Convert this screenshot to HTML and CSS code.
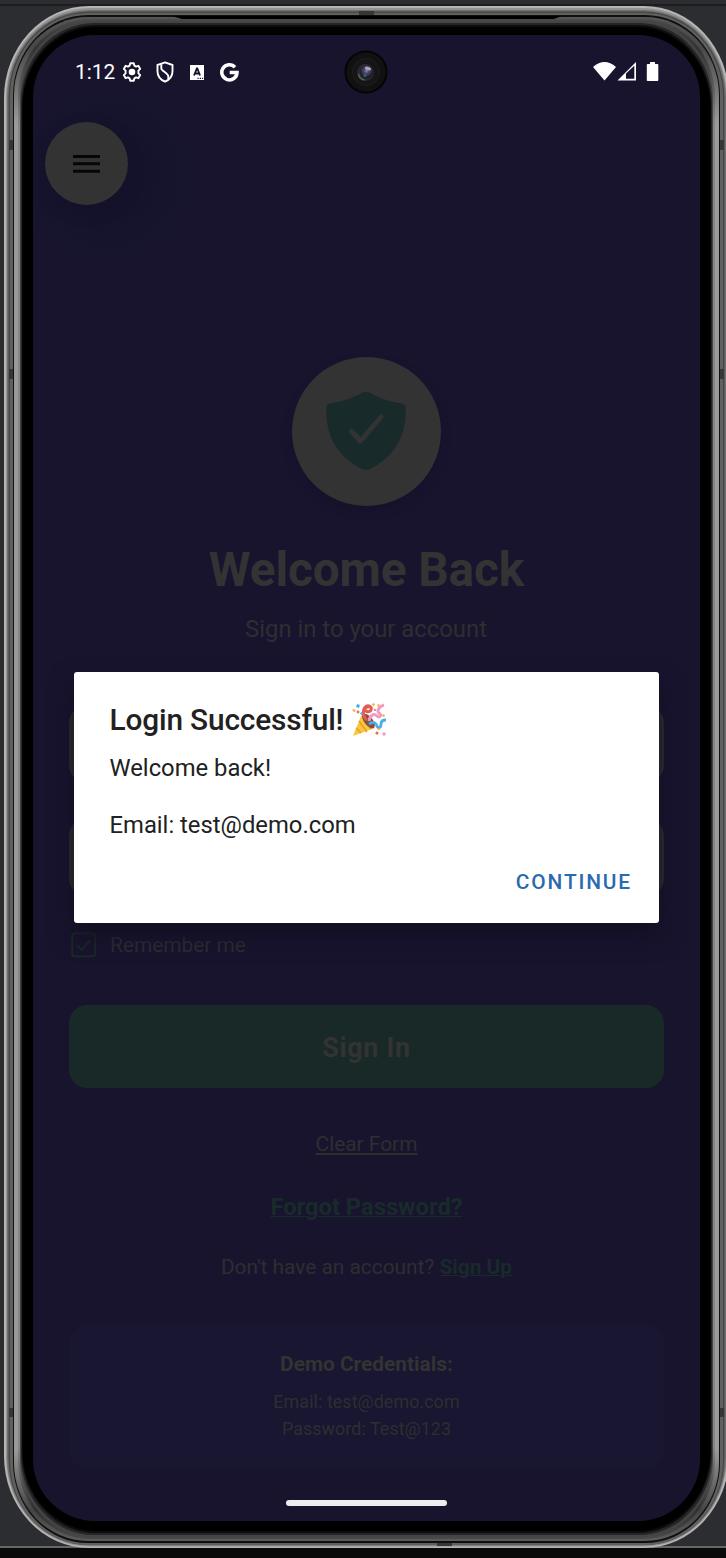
FILE: index.html
```html
<!DOCTYPE html>
<html lang="en">
<head>
<meta charset="utf-8">
<title>Sign in</title>
<link rel="stylesheet" href="styles.css">
</head>
<body>
<div class="stage">
  <svg class="frame" width="726" height="1558" viewBox="0 0 726 1558" aria-hidden="true">
    <defs>
      <linearGradient id="rim" x1="0" y1="0" x2="0" y2="1"><stop offset="0" stop-color="#555"/><stop offset=".02" stop-color="#484848"/><stop offset=".07" stop-color="#9a9a9a"/><stop offset=".94" stop-color="#9a9a9a"/><stop offset=".98" stop-color="#444"/><stop offset="1" stop-color="#5c5c5c"/></linearGradient>
      <linearGradient id="rim2" x1="0" y1="0" x2="0" y2="1"><stop offset="0" stop-color="#4a4a4a"/><stop offset=".02" stop-color="#333"/><stop offset=".07" stop-color="#858585"/><stop offset=".94" stop-color="#858585"/><stop offset=".98" stop-color="#303030"/><stop offset="1" stop-color="#494949"/></linearGradient>
    </defs>
    <rect width="726" height="1558" fill="#2c2d31"/>
    <rect y="4" width="726" height="2" fill="#1d1d20"/>
    <rect y="1546" width="726" height="2" fill="#67676a"/>
    <rect y="1548" width="726" height="10" fill="#0a0a0a"/>
    <rect x="4" y="6" width="725" height="1542" rx="85" ry="92" fill="#b5b5b3"/>
    <rect x="6" y="8" width="721" height="1538.500" rx="83" ry="90" fill="#939393"/>
    <rect x="7" y="10" width="719" height="1535.500" rx="82" ry="88" fill="#707070"/>
    <rect x="8.500" y="11.500" width="716" height="1533.500" rx="80" ry="86" fill="#474747"/>
    <rect x="10" y="13" width="713" height="1532" rx="78" ry="84" fill="#606060"/>
    <rect x="13" y="15" width="707" height="1528" rx="75" ry="80" fill="#101010"/>
    <rect x="14" y="17" width="705" height="1524" rx="74" ry="78" fill="url(#rim)"/>
    <rect x="18" y="19" width="697" height="1520" rx="72" ry="78" fill="url(#rim2)"/>
    <rect x="20" y="21" width="693" height="1516" rx="72" ry="78" fill="#444"/>
    <rect x="21" y="23" width="691" height="1512" rx="73" ry="79" fill="#252525"/>
    <rect x="22" y="25" width="689" height="1508" rx="74" ry="80" fill="#0c0c0c"/>
    <rect x="22.500" y="27" width="688" height="1504" rx="74" ry="80" fill="#000"/>
    <path d="M172 16H562L554 19H182Z" fill="#000"/>
    <path d="M9 140h4v10H9zM9 369h4v10H9zM9 1408h4v9H9zM720 140h4v10h-4zM720 369h4v10h-4zM720 1408h4v9h-4zM359 11h15v4h-15zM437 1543h15v3h-15z" fill="#363636"/>
  </svg>

  <main class="screen">
    <header class="status">
      <span class="clock">1:12</span>
      <svg class="st-gear" width="20" height="20" viewBox="0 0 20 20"><path d="M8.200 1.200h3.600l.6 2.500 1.600.9 2.400-.8 1.800 3.100-1.800 1.800v2.600l1.800 1.800-1.800 3.100-2.400-.8-1.600.9-.6 2.500H8.200l-.6-2.500-1.600-.9-2.400.8-1.800-3.100 1.800-1.800V8.700L1.800 6.900l1.800-3.100 2.400.8 1.600-.9z" fill="none" stroke="#fff" stroke-width="1.900" stroke-linejoin="round"/><circle cx="10" cy="10" r="3.300" fill="#fff"/></svg>
      <svg class="st-shield" width="18" height="22" viewBox="0 0 18 22"><path d="M9 1.400 16.500 4v6.200c0 4.800-3 8.500-7.500 10.400C4.500 18.700 1.500 15 1.500 10.200V4Z" fill="none" stroke="#fff" stroke-width="1.900"/><path d="M5.300 3.200v4.300c0 2.500 7 4.500 7 8v2.500" fill="none" stroke="#fff" stroke-width="1.900"/></svg>
      <svg class="st-a" width="14" height="15" viewBox="0 0 14 15"><rect width="14" height="15" fill="#fff"/><path d="M4 10.500 6.900 3.500h.4L10 10.500M5.200 8.500h3.700" fill="none" stroke="#18142e" stroke-width="1.900"/><path d="M7.500 12.700h1.200v1.200H7.500zm2.300 0H11v1.200H9.800zm2.200 0h1.200v1.200H12z" fill="#18142e"/></svg>
      <svg class="st-g" width="19" height="19" viewBox="0 0 19 19"><path d="M15 4.200A7.600 7.600 0 1 0 17 9.600H9.700" fill="none" stroke="#fff" stroke-width="3.500"/></svg>
      <svg class="camera" width="44" height="44" viewBox="0 0 44 44"><defs><radialGradient id="lens" cx=".5" cy=".4"><stop offset="0" stop-color="#8d88ad"/><stop offset=".4" stop-color="#4c4668"/><stop offset=".8" stop-color="#26303e"/><stop offset="1" stop-color="#1a1a1e"/></radialGradient></defs><circle cx="22" cy="22" r="21.500" fill="#030303"/><circle cx="22" cy="22" r="19.700" fill="#111"/><circle cx="22" cy="22" r="13.500" fill="#151515" stroke="#1e1e1e"/><circle cx="21.500" cy="22.500" r="8.500" fill="#2a2a2c"/><path d="M14.500 24a7.500 7.500 0 0 0 6 6" fill="none" stroke="#5a5a5a" stroke-width="1.500"/><circle cx="22.500" cy="22" r="6.500" fill="url(#lens)"/><ellipse cx="24" cy="18.500" rx="3.200" ry="1.600" transform="rotate(20 24 18.500)" fill="#b79bc9"/><circle cx="21" cy="25.500" r="1.800" fill="#35566c"/></svg>
      <svg class="signals" width="68" height="22" viewBox="0 0 68 22"><path d="M0 6Q11.500-4 23 6L11.500 19.500Z" fill="#fff"/><path d="M24.500 19.500 43 1v18.500Z" fill="#fff"/><path d="M33 17.800v-5.300l8.300-7.700v13Z" fill="#18142e"/><path d="M57 1h5v2h2.500q.8 0 .8.800v15.400q0 .8-.8.800H54.600q-.8 0-.8-.8V3.800q0-.8.8-.8H57Z" fill="#fff"/></svg>
    </header>

    <button class="menu" aria-label="Menu"><svg width="28" height="20" viewBox="0 0 28 20"><path d="M0 2.500h27M0 9.700h27M0 17.300h27" stroke="#060606" stroke-width="3"/></svg></button>

    <div class="logo"><svg width="80" height="80" viewBox="0 0 80 80"><path d="M36.500 1.500Q40-.2 43.500 1.500C53 7 64 11 76.500 12.500Q79.300 13 79.500 16C81 44 69 66 44 78Q40 79.700 36 78C11 66-1 44 .5 16Q.7 13 3.500 12.500C16 11 27 7 36.500 1.500Z" fill="#182a29"/><path d="m25.500 40.500 9 9.500 20.500-24" fill="none" stroke="#333" stroke-width="5" stroke-linecap="round" stroke-linejoin="round"/></svg></div>
    <h1 class="title">Welcome Back</h1>
    <p class="subtitle">Sign in to your account</p>

    <form class="form">
      <div class="field"></div>
      <div class="field"></div>
      <div class="remember"><svg width="26" height="26" viewBox="0 0 26 26"><rect x="1.200" y="1.200" width="23" height="23" rx="2.500" fill="none" stroke="#182a29" stroke-width="2"/><path d="m6.500 13.500 4 4.500 8.500-10" fill="none" stroke="#182a29" stroke-width="2"/></svg><span class="remember-text">Remember me</span></div>
      <div class="signin"><span class="signin-text">Sign In</span></div>
    </form>
    <p class="clear"><span class="clear-text">Clear Form</span></p>
    <p class="forgot"><span class="forgot-text">Forgot Password?</span></p>
    <p class="signup"><span class="signup-text">Don't have an account? <b class="signup-link">Sign Up</b></span></p>
    <section class="demo">
      <h2 class="demo-title">Demo Credentials:</h2>
      <p class="demo-line">Email: test@demo.com</p>
      <p class="demo-line">Password: Test@123</p>
    </section>
    <div class="homebar"></div>

    <div class="dialog" role="dialog">
      <h2 class="dialog-title"><span class="dialog-title-text">Login Successful!</span><svg width="34" height="34" viewBox="0 0 34 34"><path d="M1 33 9.500 12Q20 15 23 25Z" fill="#fcc73e"/><path d="m7 18 8 11M4 25l5 5M10 13l9 13" stroke="#e99b2d" stroke-width="1.500"/><ellipse cx="16.500" cy="18" rx="4.200" ry="8.700" transform="rotate(-39 16.500 18)" fill="#85513e"/><path d="M14.500 17C8 9 13 1 17.500 3s0 8-3.500 5 2-5 4.500-4" fill="none" stroke="#e75b52" stroke-width="3"/><path d="M17 18c1-6 5-8 8-5s5-1 2-3 1-7 5-8" fill="none" stroke="#f09ac4" stroke-width="3"/><path d="M17 21c5-3 7-1 8 2s4 2 4-2 3-4 5-4" fill="none" stroke="#4baee8" stroke-width="2.800"/><path d="m5 1 3 1-1 3-3-1zM8 10l2-1 1 2-2 1z" fill="#4baee8"/><path d="m0 7 2-1 2 2-2 1zm20-6 2-1 1 2-2 1zm5 1 2-1 1 2-2 1zm6 9 2 1-1 2-2-1zM26 25h2v2h-2z" fill="#f6ad3c"/><circle cx="6" cy="9" r="1.400" fill="#ed665b"/><circle cx="25" cy="30" r="1.600" fill="#ed665b"/><circle cx="32" cy="31" r="1.700" fill="#f09ac4"/><circle cx="23" cy="7" r="1" fill="#ed665b"/></svg></h2>
      <p class="dialog-text"><span class="dt1">Welcome back!</span></p>
      <p class="dialog-text"><span class="dt2">Email: test@demo.com</span></p>
      <button class="continue">CONTINUE</button>
    </div>
  </main>
</div>
</body>
</html>
```
FILE: styles.css
```css
* { box-sizing: border-box; margin: 0; padding: 0; }
html, body { overflow: hidden; background: #2c2d31; }
body { font-family: Roboto, sans-serif; font-weight: 400; }
button { border: 0; font-family: inherit; }
svg { display: block; flex: none; }
p, h1, h2, span { white-space: nowrap; }
.stage { position: relative; width: 726px; height: 1558px; padding: 35px 26px 37px 33px; overflow: hidden; }
.frame { position: absolute; left: 0; top: 0; }
.screen { position: relative; width: 667px; height: 1486px; border-radius: 62px; background: radial-gradient(circle at 75px 140px, #15132c 40px, #18142e 100px); color: #2e2e31; display: flex; flex-direction: column; overflow: hidden; }
.status { height: 74px; padding: 0 39px 0 42px; display: flex; align-items: center; flex: none; }
.clock { width: 47px; color: #fff; font-size: 20.860px; line-height: 26px; }
.st-shield { margin-left: 14px; }
.st-a { margin-left: 16px; }
.st-g { margin-left: 16px; }
.camera { margin-left: 105px; }
.signals { margin-left: auto; }
.menu { width: 83px; height: 83px; margin: 13px 0 0 12px; border-radius: 50%; background: #333; display: flex; align-items: center; justify-content: center; flex: none; box-shadow: 0 6px 14px #14122b; }
.logo { width: 149px; height: 149px; margin: 152px auto 0; border-radius: 50%; background: #333; display: flex; align-items: center; justify-content: center; flex: none; box-shadow: 0 5px 9px #15122b; }
.logo svg { margin: -1px 1px 0 0; }
.title { margin-top: 36px; height: 57px; font-size: 47.700px; line-height: 57px; font-weight: 700; text-align: center; letter-spacing: -0.080px; color: #333; }
.subtitle { margin-top: 16px; height: 28px; font-size: 23.850px; line-height: 28px; text-align: center; padding-right: 1px; }
.form { margin: 62px 36px 0; display: flex; flex-direction: column; flex: none; }
.field { height: 78px; margin-bottom: 35px; border-radius: 18px; background: #333; }
.remember { display: flex; align-items: center; height: 28px; padding-left: 2px; gap: 13px; font-size: 20.860px; }
.signin { margin-top: 46px; height: 83px; border-radius: 18px; background: #182927; color: #333; display: flex; align-items: center; justify-content: center; font-size: 26.800px; font-weight: 700; padding-top: 3px; letter-spacing: 0.700px; }
.clear { margin-top: 43px; height: 26px; font-size: 20.860px; line-height: 26px; text-align: center; text-decoration: underline; }
.forgot { margin-top: 36px; height: 28px; font-size: 23.850px; line-height: 28px; font-weight: 700; text-align: center; text-decoration: underline; text-decoration-thickness: 1px; color: #182a29; letter-spacing: -0.060px; }
.signup { margin-top: 33px; height: 26px; font-size: 20.860px; line-height: 26px; text-align: center; }
.signup-link { color: #182a29; text-decoration: underline; text-decoration-thickness: 1px; }
.demo { margin: 45px 36px 0; height: 144px; padding-top: 26px; border-radius: 18px; background: #181630; text-align: center; flex: none; }
.demo-title { font-size: 20.860px; line-height: 26px; font-weight: 700; margin-bottom: 11px; color: #333; }
.demo-line { font-size: 17.880px; line-height: 27px; letter-spacing: 0.080px; }
.homebar { width: 161px; height: 6px; margin: 31px auto 0; border-radius: 3px; background: #ededf0; flex: none; }
.dialog { position: absolute; left: 41px; top: 637px; width: 585px; height: 251px; border-radius: 3px; background: #fff; color: #212121; padding: 30px 28px 0 35.500px; display: flex; flex-direction: column; box-shadow: 0 12px 25px #110f22; }
.dialog-title { display: flex; align-items: center; gap: 9px; height: 36px; font-size: 29.800px; font-weight: 500; letter-spacing: -0.150px; }
.dialog-title-text { margin-top: -2px; }
.dialog-text { margin-top: 16px; height: 28px; font-size: 23.800px; line-height: 28px; }
.dialog-text + .dialog-text { margin-top: 29px; }
.continue { align-self: flex-end; margin-top: 31px; background: none; color: #2a6aae; font-size: 20.860px; line-height: 25px; font-weight: 500; letter-spacing: 1.850px; margin-right: -1px; }
```
